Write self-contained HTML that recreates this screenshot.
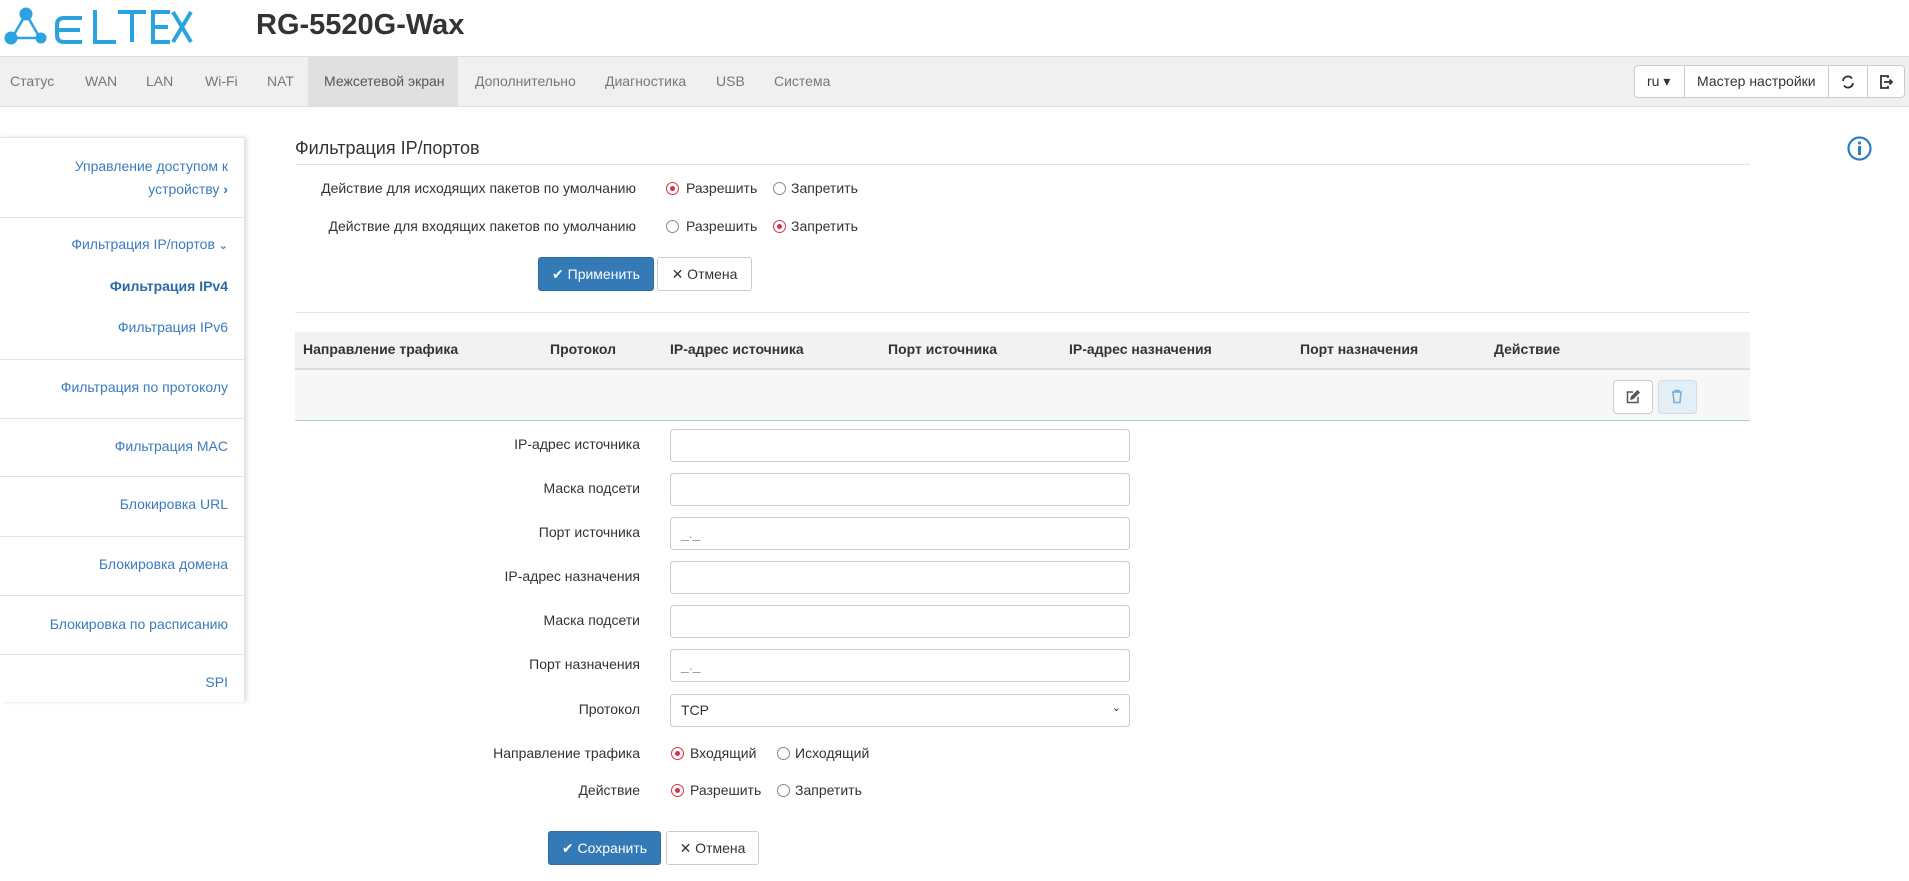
<!DOCTYPE html>
<html><head><meta charset="utf-8"><style>
*{box-sizing:border-box;margin:0;padding:0}
body{width:1909px;height:881px;position:relative;background:#fff;font-family:"Liberation Sans","DejaVu Sans",sans-serif;font-size:14px;color:#333;overflow:hidden}
.a{position:absolute;white-space:nowrap}
.nav{position:absolute;left:0;top:56px;width:1909px;height:51px;background:#f0f0f0;border-top:1px solid #ddd;border-bottom:1px solid #ddd}
.nav span{position:absolute;top:16px;color:#777;font-size:14px}
.side{position:absolute;left:0;top:137px;width:244px;height:565px;background:#fff;box-shadow:3px 0 4px rgba(0,0,0,.12)}
.sl{position:absolute;left:0;width:244px;height:1px;background:#e5e5e5}
.si{position:absolute;right:16px;color:#3a7bbf;text-align:right;white-space:nowrap}
.lbl{position:absolute;text-align:right;white-space:nowrap;color:#333}
.inp{position:absolute;left:670px;width:460px;height:33px;border:1px solid #ccc;border-radius:4px;background:#fff;color:#999;padding:7px 10px}
.r{position:absolute;width:13px;height:13px;border-radius:50%;border:1.5px solid #888;background:#fff}
.r.on{border:1.5px solid #d9304a}
.r.on::after{content:"";position:absolute;left:2.5px;top:2.5px;width:5px;height:5px;border-radius:50%;background:#d9304a}
.btnp{position:absolute;background:#337ab7;border:1px solid #2e6da4;border-radius:3px;color:#fff;text-align:center}
.btnd{position:absolute;background:#fff;border:1px solid #ccc;border-radius:3px;color:#333;text-align:center}
.th{position:absolute;top:341px;font-weight:bold;color:#333}
</style></head><body>
<svg class="a" style="left:4px;top:6px" width="190" height="40" viewBox="0 0 190 40">
<g fill="#2aa3e0" stroke="#2aa3e0">
<line x1="22" y1="8" x2="8" y2="32" stroke-width="2.5"/><line x1="22" y1="8" x2="36" y2="32" stroke-width="2.5"/><line x1="8" y1="32" x2="36" y2="32" stroke-width="2.5"/>
<circle cx="22" cy="8" r="6"/><circle cx="7" cy="32" r="6"/><circle cx="37" cy="32" r="5"/>
</g>
<g fill="none" stroke="#2aa3e0" stroke-width="4">
<path d="M78 12 H60 Q53 12 53 19 V29 Q53 36 60 36 H78 M53 24 H76"/>
<path d="M91 4 V36 H112"/>
<path d="M114 6 H142 M128 6 V36"/>
<path d="M166 6 H149 V36 H166 M149 21 H164"/>
<path d="M169 6 L187 36 M187 6 L169 36"/>
</g></svg>
<div class="a" style="left:256px;top:9px;font-size:29px;font-weight:bold;color:#333">RG-5520G-Wax</div>
<div class="nav">
<div class="a" style="left:308px;top:0;width:150px;height:49px;background:#e0e0e0"></div>
<span style="left:10px">Статус</span><span style="left:85px">WAN</span><span style="left:146px">LAN</span><span style="left:205px">Wi-Fi</span><span style="left:267px">NAT</span><span style="left:324px;color:#555">Межсетевой экран</span><span style="left:475px">Дополнительно</span><span style="left:605px">Диагностика</span><span style="left:716px">USB</span><span style="left:774px">Система</span>
<div class="a" style="left:1634px;top:8px;width:271px;height:33px;border:1px solid #ccc;border-radius:4px;background:#fff"></div>
<div class="a" style="left:1684px;top:8px;width:1px;height:33px;background:#ccc"></div>
<div class="a" style="left:1828px;top:8px;width:1px;height:33px;background:#ccc"></div>
<div class="a" style="left:1867px;top:8px;width:1px;height:33px;background:#ccc"></div>
<span style="left:1647px;top:16px;color:#333">ru ▾</span>
<span style="left:1697px;top:16px;color:#333">Мастер настройки</span>
<svg class="a" style="left:1840px;top:17px" width="16" height="16" viewBox="0 0 16 16" fill="none" stroke="#333" stroke-width="1.8"><path d="M3 7 A5 5 0 0 1 12 4.5"/><path d="M13 9 A5 5 0 0 1 4 11.5"/></svg>
<svg class="a" style="left:1878px;top:17px" width="16" height="16" viewBox="0 0 16 16" fill="none" stroke="#333" stroke-width="1.8"><path d="M10 4 V2 H3 V14 H10 V12"/><path d="M6 8 H14 M11.5 5.5 L14 8 L11.5 10.5"/></svg>
</div>
<svg class="a" style="left:1847px;top:136px" width="25" height="25" viewBox="0 0 25 25"><circle cx="12.5" cy="12.5" r="11" fill="none" stroke="#2a7dc5" stroke-width="2.2"/><circle cx="12.5" cy="7" r="1.6" fill="#2a7dc5"/><rect x="11" y="10" width="3" height="9" fill="#2a7dc5"/></svg>
<div class="side">
<div class="sl" style="top:0"></div><div class="sl" style="top:80px"></div><div class="sl" style="top:222px"></div><div class="sl" style="top:281px"></div><div class="sl" style="top:339px"></div><div class="sl" style="top:399px"></div><div class="sl" style="top:458px"></div><div class="sl" style="top:517px"></div>
<div class="si" style="top:18px;line-height:23px">Управление доступом к<br>устройству <b>›</b></div>
<div class="si" style="top:99px">Фильтрация IP/портов <b style="font-size:11px">⌄</b></div>
<div class="si" style="top:141px;font-weight:bold;color:#2a6aa8">Фильтрация IPv4</div>
<div class="si" style="top:182px">Фильтрация IPv6</div>
<div class="si" style="top:242px">Фильтрация по протоколу</div>
<div class="si" style="top:301px">Фильтрация MAC</div>
<div class="si" style="top:359px">Блокировка URL</div>
<div class="si" style="top:419px">Блокировка домена</div>
<div class="si" style="top:479px">Блокировка по расписанию</div>
<div class="si" style="top:537px">SPI</div>
</div>
<div class="a" style="left:295px;top:138px;font-size:18px;color:#333">Фильтрация IP/портов</div>
<div class="a" style="left:295px;top:164px;width:1455px;height:1px;background:#e5e5e5"></div>
<div class="lbl" style="right:1273px;top:180px">Действие для исходящих пакетов по умолчанию</div>
<div class="r on" style="left:666px;top:182px"></div><div class="a" style="left:686px;top:180px">Разрешить</div>
<div class="r" style="left:773px;top:182px"></div><div class="a" style="left:791px;top:180px">Запретить</div>
<div class="lbl" style="right:1273px;top:218px">Действие для входящих пакетов по умолчанию</div>
<div class="r" style="left:666px;top:220px"></div><div class="a" style="left:686px;top:218px">Разрешить</div>
<div class="r on" style="left:773px;top:220px"></div><div class="a" style="left:791px;top:218px">Запретить</div>
<div class="btnp" style="left:538px;top:257px;width:116px;height:34px;line-height:32px">✔ Применить</div>
<div class="btnd" style="left:657px;top:257px;width:95px;height:34px;line-height:32px"><b>✕</b> Отмена</div>
<div class="a" style="left:295px;top:312px;width:1455px;height:1px;background:#e5e5e5"></div>
<div class="a" style="left:295px;top:332px;width:1455px;height:38px;background:#f2f2f2;border-bottom:2px solid #ddd"></div>
<div class="th" style="left:303px">Направление трафика</div><div class="th" style="left:550px">Протокол</div><div class="th" style="left:670px">IP-адрес источника</div><div class="th" style="left:888px">Порт источника</div><div class="th" style="left:1069px">IP-адрес назначения</div><div class="th" style="left:1300px">Порт назначения</div><div class="th" style="left:1494px">Действие</div>
<div class="a" style="left:295px;top:370px;width:1455px;height:51px;background:#f7f7f7;border-bottom:1px solid #a8d4d8"></div>
<div class="a" style="left:1613px;top:380px;width:40px;height:34px;border:1px solid #ccc;border-radius:4px;background:#fff"></div>
<svg class="a" style="left:1626px;top:390px" width="14" height="14" viewBox="0 0 14 14" fill="none" stroke="#555" stroke-width="1.5"><path d="M7 2 H1.5 V12.5 H12 V7"/><path d="M5 9 L5.5 7 L11.5 1 L13 2.5 L7 8.5 Z" fill="#555"/></svg>
<div class="a" style="left:1658px;top:380px;width:39px;height:34px;border:1px solid #cfdde8;border-radius:4px;background:#e3eef7"></div>
<svg class="a" style="left:1670px;top:389px" width="14" height="15" viewBox="0 0 14 15" fill="none" stroke="#7aaed6" stroke-width="1.5"><path d="M2 3 H12 M5 3 V1.5 H9 V3 M3 3 L4 13.5 H10 L11 3"/></svg>
<div class="lbl" style="right:1269px;top:436px">IP-адрес источника</div><div class="inp" style="top:429px"></div>
<div class="lbl" style="right:1269px;top:480px">Маска подсети</div><div class="inp" style="top:473px"></div>
<div class="lbl" style="right:1269px;top:524px">Порт источника</div><div class="inp" style="top:517px">_._</div>
<div class="lbl" style="right:1269px;top:568px">IP-адрес назначения</div><div class="inp" style="top:561px"></div>
<div class="lbl" style="right:1269px;top:612px">Маска подсети</div><div class="inp" style="top:605px"></div>
<div class="lbl" style="right:1269px;top:656px">Порт назначения</div><div class="inp" style="top:649px">_._</div>
<div class="lbl" style="right:1269px;top:701px">Протокол</div><div class="inp" style="top:694px;color:#333">TCP<span style="position:absolute;right:8px;top:6px;font-size:11px">⌄</span></div>
<div class="lbl" style="right:1269px;top:745px">Направление трафика</div>
<div class="r on" style="left:671px;top:747px"></div><div class="a" style="left:690px;top:745px">Входящий</div>
<div class="r" style="left:777px;top:747px"></div><div class="a" style="left:795px;top:745px">Исходящий</div>
<div class="lbl" style="right:1269px;top:782px">Действие</div>
<div class="r on" style="left:671px;top:784px"></div><div class="a" style="left:690px;top:782px">Разрешить</div>
<div class="r" style="left:777px;top:784px"></div><div class="a" style="left:795px;top:782px">Запретить</div>
<div class="btnp" style="left:548px;top:831px;width:113px;height:34px;line-height:32px">✔ Сохранить</div>
<div class="btnd" style="left:666px;top:831px;width:93px;height:34px;line-height:32px"><b>✕</b> Отмена</div>
</body></html>
